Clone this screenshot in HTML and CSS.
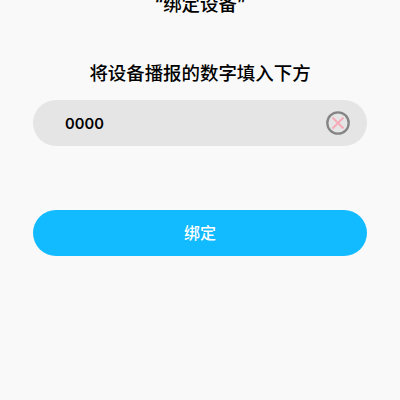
FILE: index.html
```
<!DOCTYPE html>
<html lang="zh-CN">
<head>
<meta charset="utf-8">
<title>绑定设备</title>
<link rel="stylesheet" href="styles.css">
</head>
<body>
<main class="page">
<h1 class="title">“绑定设备”</h1>
<p class="hint">将设备播报的数字填入下方</p>
<div class="field">
<span class="value">0000</span>
<svg class="clear" viewBox="0 0 24 24" width="24" height="24"><circle cx="12" cy="12" r="10.7" fill="none" stroke="#858585" stroke-width="2.3"/><path d="M6.5 6.5l11 11M17.5 6.5l-11 11" stroke="#f7abb8" stroke-width="2"/></svg>
</div>
<button class="bind">绑定</button>
</main>
</body>
</html>
```
FILE: styles.css
```
* { box-sizing: border-box; margin: 0; padding: 0; }
body {
  background: #f9f9f9;
  color: #000;
  font-family: Inter, "Noto Sans CJK SC", sans-serif;
  height: 400px;
  overflow: hidden;
}
.page { display: flex; flex-direction: column; padding: 0 33px; }
.title, .hint { text-align: center; font-size: 18.45px; font-weight: 500; line-height: 28px; }
.title { margin-top: -10px; }
.hint { margin-top: 41px; }
.field {
  display: flex;
  align-items: center;
  justify-content: space-between;
  height: 46px;
  margin-top: 13px;
  padding: 0 17px 0 32px;
  border-radius: 23px;
  background: #e5e5e5;
}
.value { padding-top: 2px; font-size: 14.7px; font-weight: 600; letter-spacing: 0.1px; }
.bind {
  height: 46px;
  margin-top: 64px;
  padding-bottom: 2px;
  border: 0;
  border-radius: 23px;
  background: #12baff;
  color: #fff;
  font: 500 16px/44px "Noto Sans CJK SC", sans-serif;
}
```
